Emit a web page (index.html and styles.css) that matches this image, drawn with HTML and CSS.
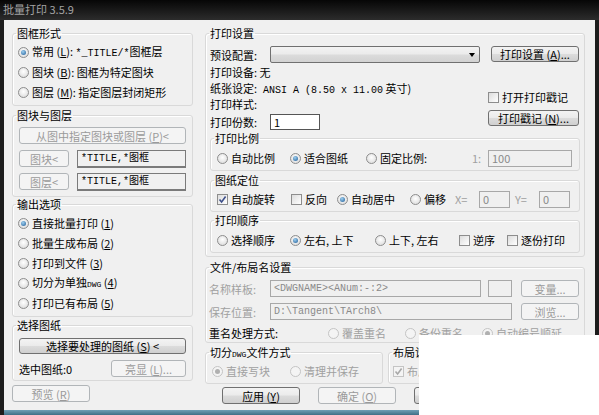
FILE: index.html
```html
<!DOCTYPE html>
<html lang="zh-CN">
<head>
    <meta charset="UTF-8">
    <title>批量打印 3.5.9</title>
    <link rel="stylesheet" href="styles.css">
</head>
<body>
<div class="window">
    <div class="titlebar">批量打印 3.5.9</div>
    <div class="client">

        <div class="col-left">
            <fieldset class="group g-frame">
                <legend>图框形式</legend>
                <div class="row20"><span class="opt"><span class="radio on"></span><span>常用 (<u>L</u>): <span class="mono">*_TITLE/*</span>图框层</span></span></div>
                <div class="row20"><span class="opt"><span class="radio"></span><span>图块 (<u>B</u>): 图框为特定图块</span></span></div>
                <div class="row20"><span class="opt"><span class="radio"></span><span>图层 (<u>M</u>): 指定图层封闭矩形</span></span></div>
            </fieldset>

            <fieldset class="group g-block">
                <legend>图块与图层</legend>
                <div class="inner">
                    <button class="btn dis wide">从图中指定图块或图层 (<u>P</u>)&lt;</button>
                    <div class="pick-row">
                        <button class="btn dis pick">图块&lt;</button>
                        <div class="field ro mono">*TITLE,*图框</div>
                    </div>
                    <div class="pick-row">
                        <button class="btn dis pick">图层&lt;</button>
                        <div class="field ro mono">*TITLE,*图框</div>
                    </div>
                </div>
            </fieldset>

            <fieldset class="group g-output">
                <legend>输出选项</legend>
                <div class="row20"><span class="opt"><span class="radio on"></span><span>直接批量打印 (<u>1</u>)</span></span></div>
                <div class="row20"><span class="opt"><span class="radio"></span><span>批量生成布局 (<u>2</u>)</span></span></div>
                <div class="row20"><span class="opt"><span class="radio"></span><span>打印到文件 (<u>3</u>)</span></span></div>
                <div class="row20"><span class="opt"><span class="radio"></span><span>切分为单独<span class="mono small">DWG</span> (<u>4</u>)</span></span></div>
                <div class="row20"><span class="opt"><span class="radio"></span><span>打印已有布局 (<u>5</u>)</span></span></div>
            </fieldset>

            <fieldset class="group g-select">
                <legend>选择图纸</legend>
                <div class="inner">
                    <button class="btn wide sel">选择要处理的图纸 (<u>S</u>) &lt;</button>
                    <div class="count-row">
                        <span>选中图纸:0</span>
                        <button class="btn dis hl">亮显 (<u>L</u>)...</button>
                    </div>
                </div>
            </fieldset>

            <button class="btn dis preview">预览 (<u>R</u>)</button>
        </div>

        <div class="col-right">
            <fieldset class="group g-print">
                <legend>打印设置</legend>
                <div class="print-top">
                    <div class="print-info">
                        <div class="info preset">
                            <span class="lbl">预设配置:</span>
                            <div class="combo"><span class="arrow"></span></div>
                        </div>
                        <div class="info">打印设备: 无</div>
                        <div class="info">纸张设定:<span class="mono"> ANSI A (8.50 x 11.00</span> 英寸)</div>
                        <div class="info">打印样式:</div>
                        <div class="info copies">
                            <span class="lbl">打印份数:</span>
                            <div class="field num">1</div>
                        </div>
                    </div>
                    <div class="print-btns">
                        <button class="btn setup">打印设置 (<u>A</u>)...</button>
                        <span class="opt stamp-chk"><span class="check"></span><span>打开打印戳记</span></span>
                        <button class="btn stamp">打印戳记 (<u>N</u>)...</button>
                    </div>
                </div>

                <fieldset class="group sub g-scale">
                    <legend>打印比例</legend>
                    <div class="opt-row">
                        <span class="opt w73"><span class="radio"></span><span>自动比例</span></span>
                        <span class="opt w76"><span class="radio on"></span><span>适合图纸</span></span>
                        <span class="opt w106"><span class="radio"></span><span>固定比例:</span></span>
                        <span class="dim w16">1:</span>
                        <div class="field dis scale">100</div>
                    </div>
                </fieldset>

                <fieldset class="group sub g-pos">
                    <legend>图纸定位</legend>
                    <div class="opt-row">
                        <span class="opt w74"><span class="check on"><svg viewBox="0 0 9 9"><path d="M1.5 4.5 L3.6 7 L7.6 1.6"/></svg></span><span>自动旋转</span></span>
                        <span class="opt w46"><span class="check"></span><span>反向</span></span>
                        <span class="opt w73"><span class="radio on"></span><span>自动居中</span></span>
                        <span class="opt w45"><span class="radio"></span><span>偏移</span></span>
                        <span class="dim w24">X=</span>
                        <div class="field dis off">0</div>
                        <span class="dim w24 gapl">Y=</span>
                        <div class="field dis off">0</div>
                    </div>
                </fieldset>

                <fieldset class="group sub g-order">
                    <legend>打印顺序</legend>
                    <div class="opt-row">
                        <span class="opt w73"><span class="radio"></span><span>选择顺序</span></span>
                        <span class="opt w85"><span class="radio on"></span><span>左右, 上下</span></span>
                        <span class="opt w84"><span class="radio"></span><span>上下, 左右</span></span>
                        <span class="opt w48"><span class="check"></span><span>逆序</span></span>
                        <span class="opt"><span class="check"></span><span>逐份打印</span></span>
                    </div>
                </fieldset>
            </fieldset>

            <fieldset class="group g-file">
                <legend>文件/布局名设置</legend>
                <div class="inner">
                    <div class="file-row">
                        <span class="lbl dim">名称样板:</span>
                        <div class="field dis tpl mono">&lt;DWGNAME&gt;&lt;ANum:-:2&gt;</div>
                        <div class="field dis tiny"></div>
                        <button class="btn dis small-btn">变量...</button>
                    </div>
                    <div class="file-row">
                        <span class="lbl dim">保存位置:</span>
                        <div class="field dis path mono">D:\Tangent\TArch8\</div>
                        <button class="btn dis small-btn">浏览...</button>
                    </div>
                    <div class="file-row dup">
                        <span class="dup-lbl">重名处理方式:</span>
                        <span class="opt dis w77"><span class="radio"></span><span>覆盖重名</span></span>
                        <span class="opt dis w77"><span class="radio"></span><span>备份重名</span></span>
                        <span class="opt dis"><span class="radio on"></span><span>自动编号顺延</span></span>
                    </div>
                </div>
            </fieldset>

            <div class="bottom-groups">
                <fieldset class="group g-split">
                    <legend>切分<span class="mono small">DWG</span>文件方式</legend>
                    <div class="opt-row">
                        <span class="opt dis w78"><span class="radio on"></span><span>直接写块</span></span>
                        <span class="opt dis"><span class="radio"></span><span>清理并保存</span></span>
                    </div>
                </fieldset>
                <fieldset class="group g-layout">
                    <legend>布局设置</legend>
                    <div class="opt-row">
                        <span class="opt dis"><span class="check on"><svg viewBox="0 0 9 9"><path d="M1.5 4.5 L3.6 7 L7.6 1.6"/></svg></span><span>布局名称</span></span>
                    </div>
                </fieldset>
            </div>

            <div class="actions">
                <button class="btn act">应用 (<u>Y</u>)</button>
                <button class="btn dis act">确定 (<u>O</u>)</button>
                <button class="btn act">取消</button>
            </div>
        </div>
    </div>
    <div class="frame-bottom"></div>
    <div class="blank"></div>
</div>
</body>
</html>
```

FILE: styles.css
```css
* {
    box-sizing: border-box;
}
html, body {
    margin: 0;
}
body {
    width: 599px;
    height: 415px;
    overflow: hidden;
    background: #1c1c1c;
    font-family: "Noto Sans CJK SC", sans-serif;
    font-size: 11px;
    line-height: 14px;
    color: #000;
}
u {
    text-decoration: underline;
    text-underline-offset: 1px;
}
.mono {
    font-family: "Liberation Mono", "Noto Sans CJK SC", monospace;
    font-size: 10px;
}
.small {
    font-size: 8px;
}
.window {
    position: relative;
    height: 415px;
}
.titlebar {
    height: 20px;
    padding: 2px 0 0 3px;
    color: #a3a3a3;
    background: linear-gradient(#060606, #2c2c2c);
}
.client {
    margin: 0 4px;
    height: 390px;
    background: #f0f0f0;
    display: flex;
    gap: 12px;
    padding: 6px 10px 0 8px;
}
.frame-bottom {
    height: 5px;
    margin: 0 4px;
    background: linear-gradient(#6f9fb5, #3f6f86);
}
.blank {
    position: absolute;
    left: 419px;
    top: 335px;
    width: 180px;
    height: 80px;
    background: #fff;
}

/* group boxes */
.group {
    margin: 0;
    padding: 0;
    border: 1px solid #d9d9d9;
    border-radius: 3px;
    min-width: 0;
    box-shadow: inset 1px 1px 0 #fff;
}
.group > legend {
    padding: 0 1px;
    margin-left: 3px;
    height: 14px;
    line-height: 14px;
}
.dim, .dis {
    color: #a0a0a0;
}

/* controls */
.opt {
    display: inline-flex;
    align-items: center;
    gap: 3px;
    white-space: nowrap;
}
.radio {
    position: relative;
    flex: none;
    width: 11px;
    height: 11px;
    border-radius: 50%;
    border: 1px solid #8d8d8d;
    background: radial-gradient(circle at 50% 40%, #fff, #d6d6d6);
}
.radio.on::after {
    content: "";
    position: absolute;
    left: 2px;
    top: 2px;
    width: 5px;
    height: 5px;
    border-radius: 50%;
    background: radial-gradient(circle at 40% 35%, #9fd0f0, #1c5a96);
}
.dis .radio {
    border-color: #c4c4c4;
    background: #f4f4f4;
}
.dis .radio.on::after {
    background: #b0b0b0;
}
.check {
    flex: none;
    width: 11px;
    height: 11px;
    border: 1px solid #8d8d8d;
    background: linear-gradient(135deg, #dcdcdc, #fff);
    display: flex;
}
.check svg {
    width: 9px;
    height: 9px;
}
.check path {
    fill: none;
    stroke: #3d4f8a;
    stroke-width: 1.6;
}
.dis .check {
    border-color: #c4c4c4;
    background: #f4f4f4;
}
.dis .check path {
    stroke: #a8a8a8;
}
.btn {
    display: flex;
    align-items: center;
    justify-content: center;
    height: 17px;
    padding: 0;
    border: 1px solid #707070;
    border-radius: 3px;
    background: linear-gradient(#f3f3f3 0%, #ebebeb 48%, #dcdcdc 52%, #cfcfcf 100%);
    font: inherit;
    color: #000;
    white-space: nowrap;
}
.btn.dis {
    border-color: #b1b5b8;
    background: #f4f4f4;
    color: #9a9a9a;
}
.field {
    display: flex;
    align-items: center;
    height: 17px;
    padding: 0 3px;
    border: 1px solid #7c7c7c;
    background: #fff;
    white-space: nowrap;
    overflow: hidden;
}
.field.ro {
    background: #f0f0f0;
    border-color: #7a7a7a;
}
.field.dis {
    background: #f0f0f0;
    border-color: #a8a8a8;
    color: #8a8a8a;
}

/* left column */
.col-left {
    width: 181px;
    display: flex;
    flex-direction: column;
}
.row20 {
    height: 20px;
    display: flex;
    align-items: center;
    padding-left: 5px;
}
.g-frame {
    padding: 2px 0 3px;
}
.g-block {
    margin-top: 2px;
}
.g-block .inner {
    padding: 0 6px 5px 6px;
}
.btn.wide {
    width: 100%;
    margin-top: 5px;
}
.pick-row {
    display: flex;
    gap: 8px;
    margin-top: 6px;
}
.pick-row + .pick-row {
    margin-top: 5px;
}
.btn.pick {
    width: 50px;
}
.pick-row .field {
    flex: 1;
    height: 18px;
    border-width: 1px 1px 2px 1px;
}
.g-output {
    padding: 2px 0 3px;
}
.g-select {
    margin-top: 1px;
}
.g-select .inner {
    padding: 0 6px 3px 6px;
}
.btn.sel {
    margin-top: 6px;
    height: 16px;
}
.count-row {
    display: flex;
    align-items: center;
    justify-content: space-between;
    margin-top: 6px;
}
.btn.hl {
    width: 75px;
}
.btn.preview {
    width: 78px;
    margin-top: 4px;
}

/* right column */
.col-right {
    width: 380px;
    display: flex;
    flex-direction: column;
}
.g-print {
    padding: 0 0 3px 0;
}
.print-top {
    display: flex;
    justify-content: space-between;
    height: 91px;
    padding: 0 4px 0 4px;
}
.print-info {
    display: flex;
    flex-direction: column;
    padding-top: 6px;
}
.info {
    height: 16px;
    line-height: 16px;
    white-space: nowrap;
}
.info.preset,
.info.copies {
    display: flex;
    align-items: center;
    height: 18px;
}
.lbl {
    width: 60px;
    flex: none;
}
.combo {
    position: relative;
    width: 210px;
    height: 17px;
    border: 1px solid #707070;
    border-radius: 2px;
    background: linear-gradient(#f3f3f3 0%, #ebebeb 48%, #dcdcdc 52%, #d2d2d2 100%);
}
.arrow {
    position: absolute;
    right: 4px;
    top: 6px;
    border-left: 3px solid transparent;
    border-right: 3px solid transparent;
    border-top: 4px solid #000;
}
.info.copies {
    margin-top: 2px;
}
.field.num {
    width: 50px;
    height: 16px;
    border-color: #555;
}
.print-btns {
    width: 94px;
    display: flex;
    flex-direction: column;
    align-items: flex-end;
    padding: 6px 1px 0 0;
}
.btn.setup {
    width: 88px;
    height: 16px;
}
.stamp-chk {
    align-self: flex-start;
    margin: 28px 0 0 2px;
    height: 14px;
}
.btn.stamp {
    width: 91px;
    height: 16px;
    margin-top: 6px;
}
.group.sub {
    margin-left: 4px;
    margin-right: 4px;
    padding: 0 0 3px 0;
}
.group.sub .opt-row {
    padding-left: 6px;
}
.g-pos {
    margin-top: 2px;
}
.g-order {
    margin-top: 1px;
}
.opt-row {
    display: flex;
    align-items: center;
    height: 18px;
    margin-top: 4px;
}
.g-pos .opt-row {
    margin-top: 3px;
}
.w16 { width: 16px; flex: none; }
.w24 { width: 24px; flex: none; }
.w45 { width: 45px; flex: none; }
.w46 { width: 46px; flex: none; }
.w48 { width: 48px; flex: none; }
.w73 { width: 73px; flex: none; }
.w74 { width: 74px; flex: none; }
.w76 { width: 76px; flex: none; }
.w77 { width: 77px; flex: none; }
.w78 { width: 78px; flex: none; }
.w84 { width: 84px; flex: none; }
.w85 { width: 85px; flex: none; }
.w106 { width: 106px; flex: none; }
.field.scale {
    width: 84px;
}
.field.off {
    width: 31px;
}
.gapl {
    margin-left: 5px;
}
.g-file {
    margin-top: 3px;
}
.g-file .inner {
    padding: 0 5px 1px 3px;
}
.file-row {
    display: flex;
    align-items: center;
    height: 17px;
    margin-top: 6px;
    white-space: nowrap;
}
.file-row .lbl {
    width: 61px;
}
.field.tpl {
    width: 211px;
}
.field.tiny {
    width: 24px;
    margin-left: 7px;
}
.field.path {
    width: 242px;
}
.btn.small-btn {
    width: 58px;
    margin-left: auto;
}
.file-row.dup {
    height: 16px;
    margin-top: 5px;
}
.dup-lbl {
    width: 119px;
    flex: none;
}
.bottom-groups {
    display: flex;
    gap: 5px;
    margin-top: 2px;
}
.g-split {
    width: 178px;
    padding: 0 0 3px 0;
}
.g-split .opt-row {
    margin-top: 3px;
    padding-left: 6px;
}
.g-layout {
    flex: 1;
    padding: 0 0 3px 0;
}
.g-layout .opt-row {
    margin-top: 3px;
    padding-left: 4px;
}
.actions {
    display: flex;
    gap: 18px;
    margin-top: 3px;
    padding-left: 17px;
}
.btn.act {
    width: 78px;
}
```
